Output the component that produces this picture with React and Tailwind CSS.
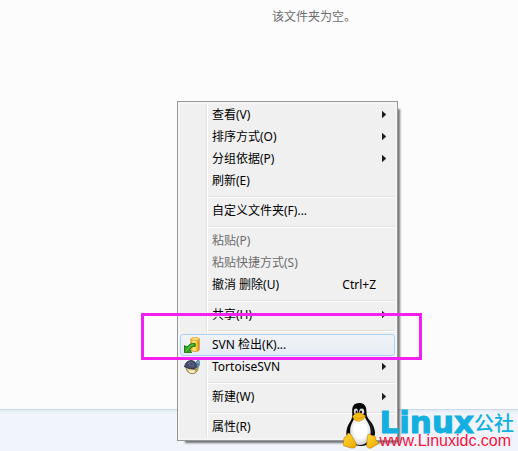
import React from "react";

const groups = [
  [
    { label: "查看(V)", submenu: true },
    { label: "排序方式(O)", submenu: true },
    { label: "分组依据(P)", submenu: true },
    { label: "刷新(E)" },
  ],
  [{ label: "自定义文件夹(F)..." }],
  [
    { label: "粘贴(P)", disabled: true },
    { label: "粘贴快捷方式(S)", disabled: true },
    { label: "撤消 删除(U)", shortcut: "Ctrl+Z" },
  ],
  [{ label: "共享(H)", submenu: true }],
  [
    { label: "SVN 检出(K)...", icon: "checkout", active: true },
    { label: "TortoiseSVN", icon: "tortoise", submenu: true },
  ],
  [{ label: "新建(W)", submenu: true }],
  [{ label: "属性(R)" }],
];

function CheckoutIcon() {
  return (
    <svg viewBox="0 0 16 16" className="h-4 w-4" aria-hidden="true">
      <defs>
        <linearGradient id="drum" x1="0" x2="1" y1="0" y2="0">
          <stop offset="0" stopColor="#e9a51d" />
          <stop offset=".35" stopColor="#ffe98a" />
          <stop offset=".7" stopColor="#f8c033" />
          <stop offset="1" stopColor="#cf8512" />
        </linearGradient>
      </defs>
      <path d="M6.800 1.800v10.900c0 1 1.800 1.800 4.200 1.800s4.300-.8 4.300-1.800V1.800z" fill="url(#drum)" stroke="#c98a1c" strokeWidth=".7" />
      <ellipse cx="11" cy="1.900" rx="4.200" ry="1.500" fill="#ffdf70" stroke="#d29a25" strokeWidth=".7" />
      <path d="M11.200 6.600C7.600 6 4.800 7.400 3.200 10L.5 8.600V15.700H7.600L5.800 12.600C6.800 10.500 8.400 9.300 11.200 9.400z" fill="#35a51c" stroke="#14710f" strokeWidth=".9" strokeLinejoin="round" />
      <path d="M1.900 14.300 4.200 11.300C5.600 9 7.200 8 9.700 7.800" fill="none" stroke="#7cd950" strokeWidth=".8" />
    </svg>
  );
}

function TortoiseIcon() {
  return (
    <svg viewBox="0 0 16 16" className="h-4 w-4" aria-hidden="true">
      <path d="M2 8.300C2.600 12.400 5 14.600 8.300 14.600c3.400 0 5.600-2.400 5.900-6.600z" fill="#e3cd85" stroke="#74633a" strokeWidth=".8" />
      <path d="M4 10.400c2 1.600 5.100 1.600 6.700.3l-.7 3H6z" fill="#fff6cf" />
      <path d="M10.800 10 13.200 9l-.4 2.600-1.800 1.200z" fill="#b9973e" />
      <path d="M.4 7.700C1.400 3.800 3.800 1.600 7 1.600c3.300 0 5.700 2.400 5.800 6.300l-2.600 2.300-5.500-.8z" fill="#434969" stroke="#292d47" strokeWidth=".8" strokeLinejoin="round" />
      <path d="M3.200 5.500 6 3.200l3.200.9.700 3M6 3.200l-.6 3.300 4.300.7" fill="none" stroke="#737a9c" strokeWidth=".6" />
      <path d="M12.200 2.800 14.400.8l1.200 1.800-.3 4-1.600 1.400-.8-2.500z" fill="#4a8ba4" stroke="#315d78" strokeWidth=".5" />
      <path d="M13.600 2.400h1v1.600h-1z" fill="#bfe3ed" />
    </svg>
  );
}

function Penguin() {
  return (
    <svg viewBox="0 0 36 47" className="h-[47px] w-9 shrink-0" aria-hidden="true">
      <defs>
        <radialGradient id="belly" cx=".5" cy=".45" r=".6">
          <stop offset=".5" stopColor="#fff" />
          <stop offset="1" stopColor="#c9c9c9" />
        </radialGradient>
        <linearGradient id="foot" x1="0" x2="1" y1="0" y2="1">
          <stop offset="0" stopColor="#ffdc35" />
          <stop offset="1" stopColor="#eda600" />
        </linearGradient>
      </defs>
      <path d="M16 1C10.800 1 9 4.500 9.200 9.500c.2 5.500-.1 7.300-2.300 10.600C4.600 23.700 3 28 3.300 32.500L8 40.500c5 4.500 15 4.500 20 0l4-8c.3-5.500-2-10.400-5.400-14.300C23.600 14.700 23.600 12.800 23.400 8.500 23.200 3.500 21 1 16 1z" fill="#080808" />
      <path d="M12.200 14.500c-1.400 4-5.100 7.600-5.100 14.500 0 8 3.700 14 10 14S27.700 37 27.700 29.500c0-6.500-4.100-10-6-15z" fill="url(#belly)" />
      <ellipse cx="12.900" cy="9.500" rx="2" ry="2.900" fill="#ddd" />
      <ellipse cx="18.700" cy="9.400" rx="2.500" ry="3" fill="#ddd" />
      <ellipse cx="13.500" cy="10" rx=".9" ry="1.500" fill="#111" />
      <ellipse cx="18" cy="10" rx="1.100" ry="1.600" fill="#111" />
      <path d="M9.600 14.500c1.200-2.200 4-3.800 6.100-3.800 2 0 4.600 1.800 6.700 3-.2 2.900-4.300 5.600-7.100 5.600-2.300 0-5.300-2.300-5.700-4.800z" fill="#f8bd16" stroke="#b67a05" strokeWidth=".5" />
      <path d="M11.200 14.900c2.800 2.200 6.300 1.900 9.900-.5" fill="none" stroke="#c98a00" strokeWidth=".6" />
      <path d="M4.500 31.500c1.800-.8 3.300.6 4.500 2.900l3.600 6c1.800 3.300.2 5.900-3.500 5.700-2.700-.2-5.200-1.700-7.900-2.200C-.6 43.500.2 41.800.7 39.700c.3-1.400-.4-3.300.5-4.200.8-.8 2.500-.5 2.700-1.800z" fill="url(#foot)" stroke="#a36c00" strokeWidth=".5" />
      <path d="M24.700 33.500c.5-1.900 2-1.500 3.500-.4 1.500 1 3.100.3 4 1.300.8.9.1 2.600 1 3.900.9 1.300 2.600 1.500 2.500 2.700-.2 1.600-3.500 2-5.700 3.900-2.800 2.400-6.300 1.400-6.500-2z" fill="url(#foot)" stroke="#a36c00" strokeWidth=".5" />
      <path d="M25.500 19.500c2.800 3.700 4.100 7.400 3.700 12" fill="none" stroke="#464646" strokeWidth=".6" />
    </svg>
  );
}

function MenuItem({ item }) {
  return (
    <button
      type="button"
      role="menuitem"
      disabled={item.disabled}
      className={`flex h-[22px] w-full items-center rounded-[3px] border pr-[8px] text-left whitespace-pre ${
        item.active ? "border-[#aecff7] bg-linear-to-b from-[#f1f3f6] to-[#e5ecf6]" : "border-transparent"
      } ${item.disabled ? "text-[#6d6d6d]" : "text-black"}`}
    >
      <span className="flex w-[31px] shrink-0 pl-[3px]">
        {item.icon === "checkout" && <CheckoutIcon />}
        {item.icon === "tortoise" && <TortoiseIcon />}
      </span>
      <span className="grow">{item.label}</span>
      {item.shortcut && <span className="pr-[10px]">{item.shortcut}</span>}
      {item.submenu && (
        <svg viewBox="0 0 4 8" className="h-2 w-1" aria-hidden="true">
          <path d="M0 0 4 3.500 0 7z" fill="#1c1c1c" stroke="#1c1c1c" strokeWidth=".4" />
        </svg>
      )}
    </button>
  );
}

function ContextMenu() {
  return (
    <div
      role="menu"
      className="absolute top-[101px] left-[177px] w-[221px] border border-[#979797] bg-[#f5f5f5] p-[2px] text-[12px] leading-5 shadow-[5px_5px_2px_-3px_rgba(0,0,0,0.55)]"
    >
      <div className="bg-[#f0f0f0] bg-[linear-gradient(to_right,transparent_26px,#e2e3e3_26px,#e2e3e3_27px,#fff_27px,#fff_28px,transparent_28px)]">
        {groups.map((group, index) => (
          <div key={group[0].label} role="group">
            {index > 0 && (
              <div role="separator" className="h-2 pt-1 pl-7">
                <div className="h-[2px] border-t border-[#e0e0e0] bg-white" />
              </div>
            )}
            {group.map((item) => (
              <MenuItem key={item.label} item={item} />
            ))}
          </div>
        ))}
      </div>
    </div>
  );
}

function Watermark() {
  return (
    <div className="absolute right-1 bottom-[2px] flex items-end">
      <Penguin />
      <div className="flex flex-col pb-[2px]">
        <div className="flex items-end text-[#12afe0]">
          <span className="font-['DejaVu_Sans',sans-serif] text-[31px] leading-[26px] font-bold [-webkit-text-stroke:1px_#12afe0]">Linux</span>
          <span className="font-['Noto_Sans_CJK_SC',sans-serif] text-[20px] leading-6 font-medium">公社</span>
        </div>
        <a href="#home" className="font-['Liberation_Sans',sans-serif] text-[16px] leading-3 text-[#f5103f]">
          www.Linuxidc.com
        </a>
      </div>
    </div>
  );
}

export default function App() {
  return (
    <div className="relative flex min-h-screen flex-col overflow-hidden bg-[#fcfcfc] font-['Noto_Sans','Noto_Sans_CJK_SC',sans-serif] text-[12px]">
      <main className="grow pt-[7px] pl-[110px] text-center leading-5 text-[#6d6d6d]">该文件夹为空。</main>
      <footer className="h-[42px] border-t border-[#cbdaea] bg-linear-to-b from-[#e3ebf5] to-[#f1f5fb] to-[4px]" />
      <ContextMenu />
      <div className="pointer-events-none absolute top-[313px] left-[141px] h-[47px] w-[281px] border-3 border-[#f31ff3]" />
      <Watermark />
    </div>
  );
}
